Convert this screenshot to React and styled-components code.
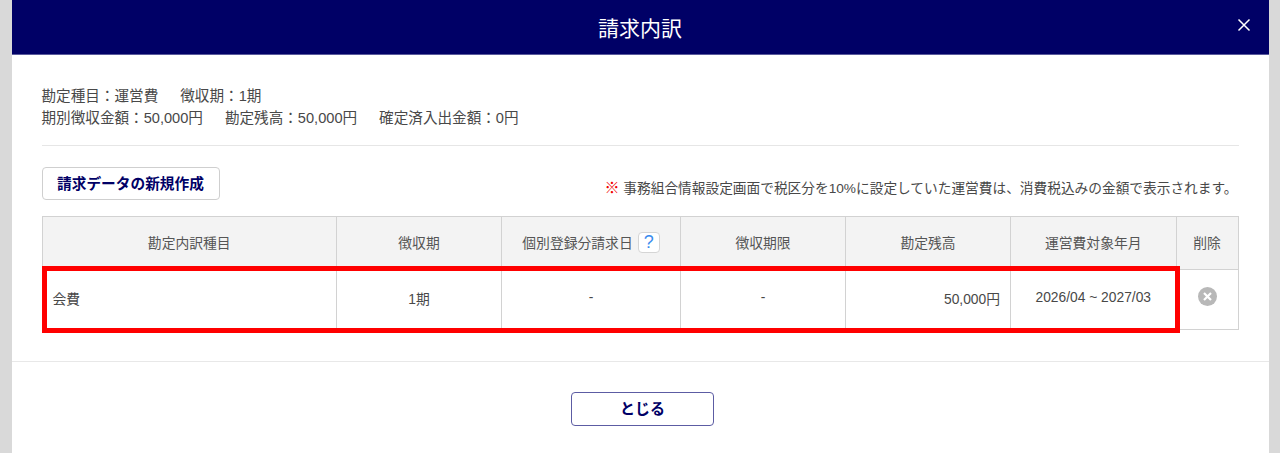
import styled, { createGlobalStyle } from "styled-components";

const GlobalStyle = createGlobalStyle`
  html, body {
    margin: 0;
    padding: 0;
    height: 453px;
    overflow: hidden;
    background: #d9d9d9;
  }
  * {
    box-sizing: border-box;
  }
`;

const FONT = `"Liberation Sans", "Noto Sans CJK JP", sans-serif`;

const columns = [
  { width: 294.5 },
  { width: 165 },
  { width: 179 },
  { width: 165 },
  { width: 165 },
  { width: 165.5 },
  { width: 62 },
];

function CloseIcon() {
  return (
    <svg width="14" height="14" viewBox="0 0 14 14" aria-hidden="true">
      <path d="M1.5 1.5 L12.5 12.5 M12.5 1.5 L1.5 12.5" stroke="#fff" strokeWidth="1.5" fill="none" />
    </svg>
  );
}

function DeleteIcon() {
  return (
    <svg width="19" height="19" viewBox="0 0 19 19" aria-hidden="true">
      <circle cx="9.5" cy="9.5" r="9.5" fill="#b8b8b8" />
      <path d="M6 6 L13 13 M13 6 L6 13" stroke="#fff" strokeWidth="2.2" fill="none" />
    </svg>
  );
}

function App() {
  return (
    <>
      <GlobalStyle />
      <Modal>
        <Header>
          <Title>請求内訳</Title>
          <CloseButton>
            <CloseIcon />
          </CloseButton>
        </Header>
        <Content>
          <Summary>
            <SummaryRow>
              <span>勘定種目：運営費</span>
              <span>徴収期：1期</span>
            </SummaryRow>
            <SummaryRow>
              <span>期別徴収金額：50,000円</span>
              <span>勘定残高：50,000円</span>
              <span>確定済入出金額：0円</span>
            </SummaryRow>
          </Summary>
          <Divider />
          <Toolbar>
            <CreateButton>請求データの新規作成</CreateButton>
            <Note>
              <Mark>※</Mark> 事務組合情報設定画面で税区分を10%に設定していた運営費は、消費税込みの金額で表示されます。
            </Note>
          </Toolbar>
          <TableWrap>
            <Table>
              <colgroup>
                {columns.map((c, i) => (
                  <col key={i} style={{ width: c.width }} />
                ))}
              </colgroup>
              <thead>
                <tr>
                  <Th>勘定内訳種目</Th>
                  <Th>徴収期</Th>
                  <Th>
                    <HelpLabel>
                      個別登録分請求日
                      <HelpBadge>?</HelpBadge>
                    </HelpLabel>
                  </Th>
                  <Th>徴収期限</Th>
                  <Th>勘定残高</Th>
                  <Th>運営費対象年月</Th>
                  <Th>削除</Th>
                </tr>
              </thead>
              <tbody>
                <tr>
                  <Td $align="left">会費</Td>
                  <Td>1期</Td>
                  <Td>-</Td>
                  <Td>-</Td>
                  <Td $align="right">50,000円</Td>
                  <Td>2026/04 ~ 2027/03</Td>
                  <IconCell>
                    <DeleteIcon />
                  </IconCell>
                </tr>
              </tbody>
            </Table>
            <Highlight />
          </TableWrap>
        </Content>
        <Footer>
          <CloseAction>とじる</CloseAction>
        </Footer>
      </Modal>
    </>
  );
}

const Modal = styled.div`
  margin: 0 11.5px;
  height: 453px;
  background: #fff;
  font-family: ${FONT};
  color: #484848;
  overflow: hidden;
`;

const Header = styled.header`
  position: relative;
  height: 55px;
  background: #000066;
  border-bottom: 1px solid #5a5a9c;
  display: flex;
  align-items: center;
  justify-content: center;
`;

const Title = styled.h1`
  margin: 0;
  font-size: 21px;
  font-weight: 400;
  color: #fff;
`;

const CloseButton = styled.div`
  position: absolute;
  right: 18px;
  top: 18px;
  width: 14px;
  height: 14px;
  display: flex;
`;

const Content = styled.div`
  padding: 30px 30px 0 30px;
`;

const Summary = styled.div`
  font-size: 14.6px;
  line-height: 22px;
`;

const SummaryRow = styled.div`
  display: flex;
  gap: 22px;
`;

const Divider = styled.hr`
  margin: 16px 0 0;
  border: 0;
  border-top: 1px solid #e6e6e6;
`;

const Toolbar = styled.div`
  margin-top: 21px;
  height: 33px;
  display: flex;
  align-items: flex-end;
  justify-content: space-between;
`;

const CreateButton = styled.button`
  width: 178px;
  height: 33px;
  padding: 0 0 3px;
  background: #fff;
  border: 1px solid #cfcfcf;
  border-radius: 4px;
  font-family: ${FONT};
  font-size: 14.7px;
  font-weight: 700;
  color: #000066;
`;

const Note = styled.p`
  margin: 0 1px 2px 0;
  font-size: 13.7px;
  line-height: 18px;
  color: #484848;
`;

const Mark = styled.span`
  font-size: 15px;
  color: #f00000;
  font-weight: 700;
`;

const TableWrap = styled.div`
  position: relative;
  margin-top: 16px;
`;

const Table = styled.table`
  width: 1196px;
  table-layout: fixed;
  border-collapse: collapse;
  font-size: 13.8px;
`;

const Th = styled.th`
  height: 53px;
  padding: 0 0 2px;
  background: #f3f3f3;
  border: 1px solid #d2d2d2;
  font-weight: 400;
  text-align: center;
  color: #555;
`;

const Td = styled.td`
  height: 60px;
  padding: 0 10px 4px;
  border: 1px solid #d2d2d2;
  text-align: ${(p) => p.$align || "center"};
`;

const IconCell = styled(Td)`
  padding: 0 0 6px;
  svg {
    display: block;
    margin: 0 auto;
  }
`;

const HelpLabel = styled.span`
  display: inline-flex;
  align-items: center;
  gap: 5px;
`;

const HelpBadge = styled.span`
  width: 22px;
  height: 21px;
  background: #fff;
  border: 1px solid #d5d5d5;
  border-radius: 4px;
  font-size: 18px;
  font-weight: 400;
  line-height: 19px;
  color: #3b8cee;
`;

const Highlight = styled.div`
  position: absolute;
  left: 0.5px;
  top: 50px;
  width: 1137.5px;
  height: 67px;
  border: 5.5px solid #ff0000;
  pointer-events: none;
`;

const Footer = styled.footer`
  margin-top: 31px;
  border-top: 1px solid #e8e8e8;
  padding: 30px 0 0 5px;
  display: flex;
  justify-content: center;
`;

const CloseAction = styled.button`
  width: 143px;
  height: 34px;
  padding: 0 0 3px;
  background: #fff;
  border: 1px solid #5c5ca3;
  border-radius: 4px;
  font-family: ${FONT};
  font-size: 15px;
  font-weight: 700;
  color: #000066;
`;

export default App;
